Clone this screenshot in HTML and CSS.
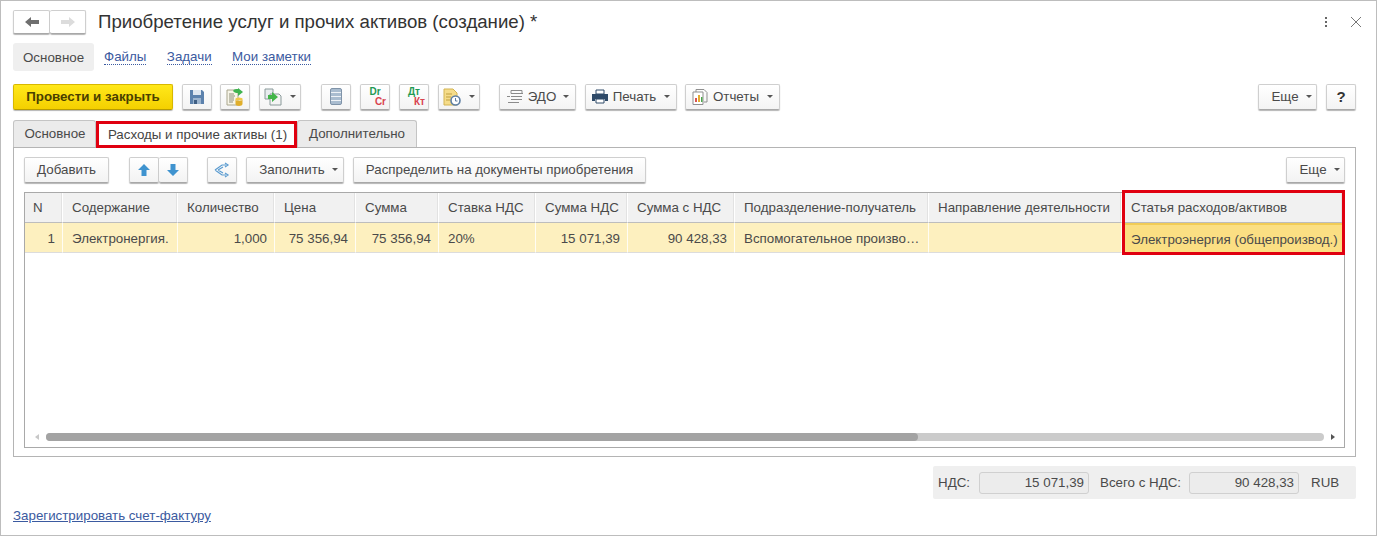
FILE: index.html
```html
<!DOCTYPE html>
<html lang="ru">
<head>
<meta charset="utf-8">
<title>Приобретение услуг и прочих активов</title>
<link rel="stylesheet" href="styles.css">
</head>
<body>
<div class="window">
  <header class="titlebar">
    <div class="group">
      <button class="btn nav"><svg width="14" height="12" viewBox="0 0 14 12"><path d="M0 6 6 1v3h8v4H6v3z" fill="#6f6f6f"/></svg></button>
      <button class="btn nav"><svg width="14" height="12" viewBox="0 0 14 12"><path d="M14 6 8 1v3H0v4h8v3z" fill="#dcdcdc"/></svg></button>
    </div>
    <h1 class="title">Приобретение услуг и прочих активов (создание) *</h1>
    <div class="window-tools">
      <svg width="4" height="12" viewBox="0 0 4 12"><path d="M1 1h2v2H1zM1 5h2v2H1zM1 9h2v2H1z" fill="#666"/></svg>
      <svg width="12" height="12" viewBox="0 0 12 12"><path d="M1 1l10 10M11 1 1 11" stroke="#777" fill="none"/></svg>
    </div>
  </header>

  <nav class="sections">
    <span class="section current">Основное</span>
    <a class="section link">Файлы</a>
    <a class="section link">Задачи</a>
    <a class="section link">Мои заметки</a>
  </nav>

  <div class="toolbar main-toolbar">
    <button class="btn primary">Провести и закрыть</button>
    <button class="btn icon"><svg width="16" height="16" viewBox="0 0 16 16"><path d="M1 1h12l2 2v12H1z" fill="#5c82ad"/><path d="M4 1h8v5H4z" fill="#dfe7f0"/><path d="M4 9h8v6H4z" fill="#9db5cf"/><path d="M5 11h3v4H5z" fill="#3f5f85"/></svg></button>
    <button class="btn icon tight"><svg width="18" height="18" viewBox="0 0 18 18"><path d="M1 2h9l2 2v13H1z" fill="#f7f5e8" stroke="#a9a68e"/><path d="M3 6h5M3 8h6M3 10h5M3 12h5M3 14h4" stroke="#8d8d7a"/><path d="M7 3c1-2 3-2 5-2V0l5 4-5 4V5c-2 0-3 0-5-2z" fill="#3fb34f"/><ellipse cx="13" cy="11" rx="3.500" ry="1.500" fill="#efc94a"/><path d="M9.500 11v5c0 1 1.500 2 3.500 2s3.500-1 3.500-2v-5c0 1-1.500 2-3.500 2s-3.500-1-3.500-2z" fill="#e0ae2b"/></svg></button>
    <button class="btn icon-menu"><svg width="18" height="18" viewBox="0 0 18 18"><path d="M1 1h8v10H1z" fill="#e8ecef" stroke="#8a9a9a"/><path d="M6 6h9l2 2v9H6z" fill="#f4f4f4" stroke="#8a9a9a"/><path d="M4 7h4V4l6 5-6 5v-3H4z" fill="#43b549"/></svg><i class="caret"></i></button>
    <button class="btn icon gap-l"><svg width="12" height="17" viewBox="0 0 12 17"><rect x=".5" y=".5" width="11" height="16" rx="1.500" fill="#a9bccf" stroke="#7f93a8"/><path d="M1 4.500h10M1 8.500h10M1 12.500h10" stroke="#eef2f6"/></svg></button>
    <button class="btn icon"><span class="drcr"><span class="dr">Dr</span><span class="cr">Cr</span></span></button>
    <button class="btn icon"><span class="drcr"><span class="dr">Дт</span><span class="cr">Кт</span></span></button>
    <button class="btn icon-menu"><svg width="18" height="18" viewBox="0 0 18 18"><path d="M1 1h9l4 4v12H1z" fill="#f5dc8a" stroke="#d3b452"/><path d="M3 6h6M3 9h5M3 12h4" stroke="#bf9f3f"/><circle cx="12.500" cy="12.500" r="4.500" fill="#fff" stroke="#5d7ea3" stroke-width="1.600"/><path d="M12.500 10v3h2" stroke="#5d7ea3" fill="none"/></svg><i class="caret"></i></button>
    <button class="btn text-btn edo"><svg width="18" height="16" viewBox="0 0 18 16"><path d="M5 1.500h11v3H5zM5 7.500h11M5 10.500h11M2 13.500h11M1 7.500h3M14 4.500h3" stroke="#8b8b8b" fill="none"/></svg>ЭДО<i class="caret"></i></button>
    <button class="btn text-btn print"><svg width="16" height="15" viewBox="0 0 16 15"><path d="M4 1h8v4H4z" fill="#fff" stroke="#2e4a68"/><path d="M0 5h16v7h-3v-2H3v2H0z" fill="#2e4a68"/><path d="M4 10h8v4H4z" fill="#fff" stroke="#2e4a68"/></svg>Печать<i class="caret"></i></button>
    <button class="btn text-btn reports"><svg width="16" height="16" viewBox="0 0 16 16"><path d="M4 .5h8l3 3V13h-3M4 .5V3" fill="none" stroke="#8f8f8f"/><path d="M1 3h10v12.500H1z" fill="#fff" stroke="#8f8f8f"/><path d="M3 9h2v4H3z" fill="#d9534f"/><path d="M6 6h2v7H6z" fill="#e5ac33"/><path d="M9 8h1.500v5H9z" fill="#4ca64c"/></svg>Отчеты<i class="caret"></i></button>
    <button class="btn label push">Еще<i class="caret"></i></button>
    <button class="btn icon help">?</button>
  </div>

  <div class="tabs">
    <span class="tab">Основное</span>
    <span class="tab active">Расходы и прочие активы (1)</span>
    <span class="tab">Дополнительно</span>
  </div>

  <section class="panel">
    <div class="toolbar panel-toolbar">
      <button class="btn label add">Добавить</button>
      <div class="group arrows">
        <button class="btn icon"><svg width="14" height="14" viewBox="0 0 14 14"><path d="M7 1l6 6H9.500v6h-5V7H1z" fill="#3f93cf"/></svg></button>
        <button class="btn icon"><svg width="14" height="14" viewBox="0 0 14 14"><path d="M7 13l6-6H9.500V1h-5v6H1z" fill="#3f93cf"/></svg></button>
      </div>
      <button class="btn icon share"><svg width="16" height="16" viewBox="0 0 16 16"><path d="M1 8l7-5h4M1 8l7 5h4M4 8l5-3M4 8l5 3M11 1l3 2-3 2M11 11l3 2-3 2" fill="none" stroke="#5a9bd0" stroke-width="1.200"/></svg></button>
      <button class="btn label fill">Заполнить<i class="caret"></i></button>
      <button class="btn label distribute">Распределить на документы приобретения</button>
      <button class="btn label push">Еще<i class="caret"></i></button>
    </div>

    <div class="grid-box">
      <div class="grid">
        <div class="th">N</div>
        <div class="th">Содержание</div>
        <div class="th">Количество</div>
        <div class="th">Цена</div>
        <div class="th">Сумма</div>
        <div class="th">Ставка НДС</div>
        <div class="th">Сумма НДС</div>
        <div class="th">Сумма с НДС</div>
        <div class="th">Подразделение-получатель</div>
        <div class="th">Направление деятельности</div>
        <div class="th">Статья расходов/активов</div>

        <div class="td num">1</div>
        <div class="td">Электронергия.</div>
        <div class="td num">1,000</div>
        <div class="td num">75 356,94</div>
        <div class="td num">75 356,94</div>
        <div class="td">20%</div>
        <div class="td num">15 071,39</div>
        <div class="td num">90 428,33</div>
        <div class="td clip">Вспомогательное произво…</div>
        <div class="td"></div>
        <div class="td current-cell">Электроэнергия (общепроизвод.)</div>
      </div>
      <div class="scrollbar">
        <i class="arrow-left"></i>
        <div class="track"><div class="thumb"></div></div>
        <i class="arrow-right"></i>
      </div>
      <div class="highlight"></div>
    </div>
  </section>

  <div class="totals-row">
    <div class="totals">
      <span class="vat-label">НДС:</span>
      <span class="field">15 071,39</span>
      <span class="total-label">Всего с НДС:</span>
      <span class="field">90 428,33</span>
      <span class="currency">RUB</span>
    </div>
  </div>

  <a class="invoice-link">Зарегистрировать счет-фактуру</a>
</div>
</body>
</html>
```
FILE: styles.css
```css
* { box-sizing: border-box; }
html, body { margin: 0; height: 100%; }
body {
  background: #fff;
  color: #4a4a4a;
  font: 13.33px/15px "Liberation Sans", Arial, sans-serif;
  overflow: hidden;
}
.window {
  position: relative;
  width: 1377px;
  height: 536px;
  padding: 8px 20px 0 12px;
  border: 1px solid #bdbdbd;
}
.titlebar { display: flex; align-items: center; height: 26px; }
.title {
  margin: 0 0 0 12px;
  color: #333;
  font-size: 18.65px;
  font-weight: 400;
  line-height: 24px;
  white-space: nowrap;
}
.window-tools {
  display: flex;
  align-items: center;
  gap: 22px;
  margin-left: auto;
  margin-right: -6px;
}
.group { display: flex; }
.btn {
  display: inline-flex;
  align-items: center;
  justify-content: center;
  height: 26px;
  padding: 0 0 1px;
  border: 1px solid #cfcfcf;
  border-bottom-color: #a8a8a8;
  border-radius: 2px;
  background: linear-gradient(#fff, #f3f3f3);
  box-shadow: 0 1px 1px #b5b5b5;
  color: #4a4a4a;
  font: inherit;
}
.nav { width: 37px; height: 24px; background: #fff; }
.nav + .nav { width: 36px; border-left: 0; }
.sections {
  display: flex;
  align-items: center;
  height: 28px;
  margin-top: 8px;
}
.section { white-space: nowrap; }
.current {
  display: flex;
  align-items: center;
  width: 81px;
  height: 28px;
  padding-left: 10px;
  border-radius: 3px;
  background: #efefef;
}
.link {
  margin-left: 10px;
  margin-right: 10.5px;
  border-bottom: 1px dotted #3b5aa0;
  color: #3b5aa0;
  line-height: 14px;
}
.toolbar { display: flex; align-items: center; height: 26px; }
.main-toolbar { gap: 9px; margin-top: 13px; }
.primary {
  width: 160px;
  border-color: #d8b800;
  border-bottom-color: #b89c00;
  background: linear-gradient(#ffe81a, #f4d000);
  color: #4a3f00;
  font-weight: 700;
}
.icon { flex: none; width: 30px; }
.icon-menu { flex: none; gap: 5px; width: 42px; }
.tight { margin-left: -1px; }
.gap-l { margin-left: 11px; }
.text-btn { flex: none; gap: 5px; padding: 0 0 1px; }
.edo { width: 77px; margin-left: 10px; gap: 4px; }
.print { width: 92px; }
.reports { width: 95px; margin-left: -1px; }
.caret {
  display: inline-block;
  width: 0;
  height: 0;
  margin-left: 3px;
  border: 3px solid transparent;
  border-top: 3px solid #555;
  border-bottom: 0;
}
.drcr {
  display: flex;
  flex-direction: column;
  width: 22px;
  font-size: 10px;
  font-weight: 700;
  line-height: 10px;
}
.dr { color: #1f9a54; }
.cr { align-self: flex-end; color: #d9434e; }
.label { flex: none; gap: 4px; padding: 0 0 1px; }
.push { margin-left: auto; padding-left: 8px; }
.help { color: #333; font-size: 15px; font-weight: 700; }
.main-toolbar .push { width: 59px; }

.tabs { display: flex; align-items: flex-end; height: 27px; margin-top: 10px; }
.tab {
  display: flex;
  align-items: center;
  justify-content: center;
  height: 27px;
  padding-bottom: 2px;
  border: 1px solid #c4c4c4;
  border-bottom: 0;
  border-radius: 3px 3px 0 0;
  background: #ebebeb;
  white-space: nowrap;
}
.tab:nth-child(1) { width: 83px; padding-left: 1px; }
.tab:nth-child(3) { width: 120px; }
.active {
  position: relative;
  z-index: 1;
  width: 201px;
  margin-bottom: -1px;
  padding: 0 0 1px 2px;
  border: 3px solid #e00010;
  border-radius: 0;
  background: #fff;
  color: #444;
}

.panel {
  height: 310px;
  padding: 9px 10px;
  border: 1px solid #b4b4b4;
}
.panel-toolbar { gap: 9px; }
.add { width: 85px; margin-right: 11px; }
.arrows { margin-right: 10px; }
.arrows .btn + .btn { width: 29px; border-left: 0; }
.fill { width: 98px; padding-left: 7px; }
.distribute { width: 293px; }
.panel-toolbar .push { width: 59px; }

.grid-box {
  position: relative;
  display: flex;
  flex-direction: column;
  height: 256px;
  margin-top: 9px;
  border: 1px solid #a9a9a9;
}
.grid {
  display: grid;
  grid-template-columns: 38px 115px 97px 81px 83px 97px 92px 107px 194px 193px 221px;
  grid-template-rows: 30px 30px;
  flex: none;
  width: 1318px;
}
.th, .td {
  display: flex;
  align-items: center;
  overflow: hidden;
  padding: 0 7px 0 9px;
  white-space: nowrap;
}
.th {
  border-right: 1px solid #fff;
  border-bottom: 1px solid #bdbdbd;
  background: #f1f1f1;
  box-shadow: inset -1px 0 0 #e2e2e2;
}
.th:first-child { padding-left: 8px; }
.td {
  padding-top: 1px;
  border-right: 1px solid #fffdf4;
  border-bottom: 1px solid #dcdcdc;
  background: #fdf0bf;
}
.num { justify-content: flex-end; }
.clip { text-overflow: ellipsis; }
.current-cell {
  border-top: 2px solid #f1cc57;
  border-right: 0;
  background: #fbdf83;
}
.scrollbar {
  display: flex;
  align-items: center;
  gap: 7px;
  height: 8px;
  margin: auto 9px 6px 10px;
}
.track {
  flex: 1;
  height: 8px;
  border-radius: 4px;
  background: #cbcbcb;
}
.thumb { width: 872px; height: 8px; border-radius: 4px; background: #a3a3a3; }
.arrow-left, .arrow-right { flex: none; width: 0; height: 0; border: 3px solid transparent; }
.arrow-left { border-left: 0; border-right: 4px solid #c8c8c8; }
.arrow-right { border-right: 0; border-left: 4px solid #555; }
.highlight {
  position: absolute;
  top: -3px;
  left: 1097px;
  width: 223px;
  height: 65px;
  border: 3px solid #e00010;
  pointer-events: none;
}

.totals-row { display: flex; justify-content: flex-end; margin-top: 9px; }
.totals {
  display: flex;
  align-items: center;
  width: 423px;
  height: 33px;
  padding-left: 5px;
  border-radius: 2px;
  background: #efefef;
}
.vat-label { flex: none; width: 31px; }
.field {
  display: flex;
  align-items: center;
  justify-content: flex-end;
  flex: none;
  width: 110px;
  height: 22px;
  margin-left: 10px;
  padding-right: 4px;
  border: 1px solid #d0d0d0;
  border-radius: 3px;
  background: #ececec;
}
.total-label { flex: none; width: 79px; margin-left: 11px; white-space: nowrap; }
.currency { margin-left: 12px; }
.invoice-link {
  display: block;
  width: max-content;
  margin-top: 9px;
  color: #3b5aa0;
  text-decoration: underline;
  line-height: 16px;
}
```
